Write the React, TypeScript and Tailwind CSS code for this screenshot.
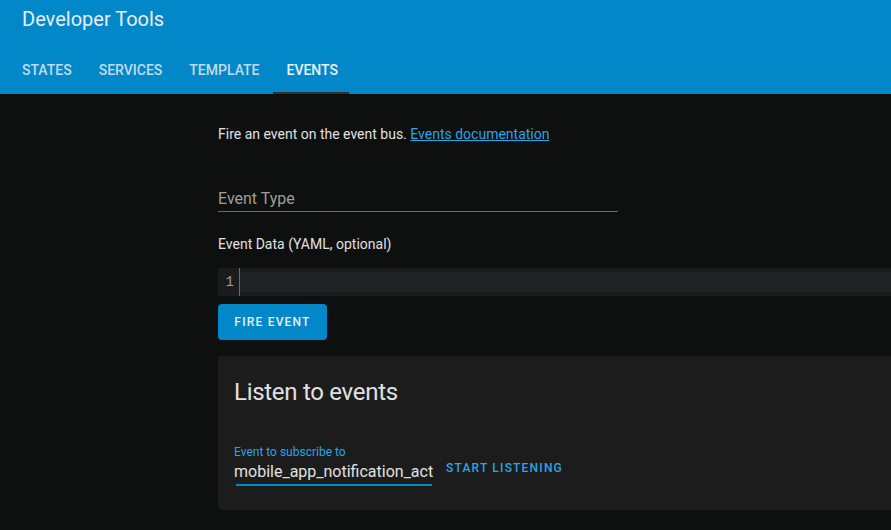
import React from "react";

export default function App() {
  const tabs = ["STATES", "SERVICES", "TEMPLATE", "EVENTS"];
  return (
    <div className="w-[891px] h-[530px] overflow-hidden bg-[#0e0f0f] font-['Roboto',sans-serif] text-[#e1e1e1]">
      <header className="h-[94px] bg-[#0288c8] flex flex-col justify-between">
        <div className="pl-[22px] pt-[7px] text-[20px] leading-6 text-[#e8eef2]">Developer Tools</div>
        <nav className="flex pl-[8px]">
          {tabs.map((t) => {
            const active = t === "EVENTS";
            return (
              <div
                key={t}
                className={
                  "h-[48px] pl-[14px] flex items-center border-y-2 border-transparent text-[14px] leading-5 font-medium " +
                  (active ? "pr-[11px] border-b-[#2f3133] text-[#eef3f6]" : "pr-[13px] text-[#c3dbe8]")
                }
              >
                {t}
              </div>
            );
          })}
        </nav>
      </header>

      <main className="pl-[218px] pt-[30px]">
        <div className="w-[720px] flex flex-col">
          <p className="text-[14px] leading-5 text-[#e1e1e1]">
            Fire an event on the event bus.{" "}
            <span className="text-[#27a6e8] underline">Events documentation</span>
          </p>

          <div className="mt-[43px] w-[400px] border-b border-[#6e6b68] text-[16px] leading-6 text-[#a19e9a]">
            Event Type
          </div>

          <div className="mt-[22px] text-[14px] leading-5 text-[#e1e1e1]">Event Data (YAML, optional)</div>

          <div className="mt-[14px] h-[28px] flex bg-[#1a1b1c]">
            <div className="w-[22px] border-r border-[#6e6b68] flex justify-end pr-[5px] pt-[4px] font-['Liberation_Mono',monospace] text-[14px] leading-5 text-[#a19e9a]">
              1
            </div>
            <div className="flex-1 pt-[4px]">
              <div className="h-[20px] bg-[#212224]" />
            </div>
          </div>

          <div className="mt-[8px]">
            <button className="h-[36px] w-[109px] rounded-[4px] bg-[#0288c8] text-[12px] leading-4 font-medium tracking-[1.2px] text-[#e8eef2]">
              FIRE EVENT
            </button>
          </div>

          <section className="mt-[16px] rounded-[4px] bg-[#1c1c1c] px-[16px] pt-[20px] pb-[24px]">
            <h2 className="text-[24px] leading-8 tracking-[-0.012em] text-[#e1e1e1]">Listen to events</h2>
            <div className="mt-[36px] flex items-end">
              <div className="w-[200px]">
                <div className="text-[12px] leading-4 text-[#27a6e8]">Event to subscribe to</div>
                <div className="text-[16px] leading-6 text-[#e1e1e1] whitespace-nowrap overflow-hidden">
                  mobile_app_notification_act
                </div>
                <div className="h-[2px] mx-[2px] bg-[#0288c8]" />
              </div>
              <button className="ml-[4px] h-[36px] px-[8px] text-[12px] leading-4 font-medium tracking-[1.2px] text-[#27a6e8]">
                START LISTENING
              </button>
            </div>
          </section>
        </div>
      </main>
    </div>
  );
}
